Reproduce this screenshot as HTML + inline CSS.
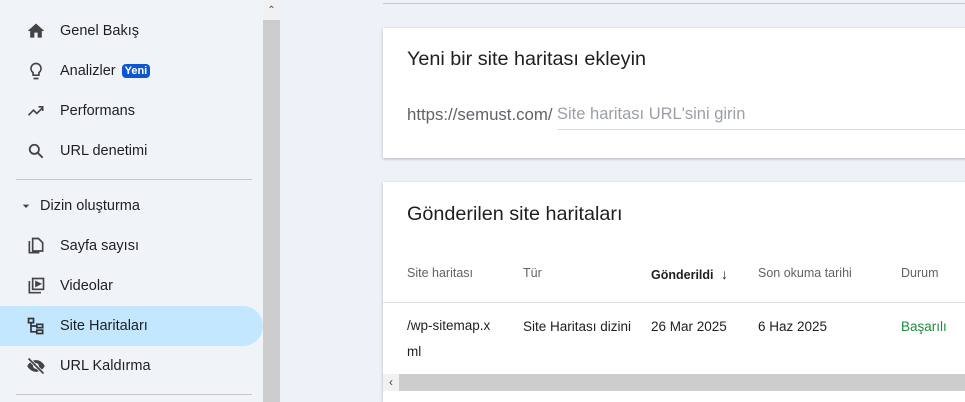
<!DOCTYPE html>
<html><head><meta charset="utf-8"><style>
*{box-sizing:border-box;margin:0;padding:0}
html,body{width:965px;height:402px;overflow:hidden}
body{background:#eef2f8;font-family:"Liberation Sans",sans-serif;position:relative;color:#1f1f1f}
.side{position:absolute;left:0;top:0;width:263px;height:402px;background:#f0f4f9}
.item{position:absolute;left:0;width:263px;height:40px;display:flex;align-items:center;font-size:14.5px;color:#1f1f1f}
.item svg{position:absolute;left:26px;width:20px;height:20px}
.item span.t{position:absolute;left:60px}
.sel{background:#c2e7ff;border-radius:0 20px 20px 0}
.hr{position:absolute;left:16px;width:236px;height:1px;background:#c7c7c7}
.badge{display:inline-block;background:#0b57d0;color:#fff;font-size:11px;font-weight:bold;padding:1px 3px;border-radius:4px;margin-left:6px;vertical-align:1px}
.sb{position:absolute;left:263px;top:0;width:17px;height:402px;background:#cdcdcd}
.sbt{position:absolute;left:263px;top:0;width:17px;height:20px;background:#f1f1f1;font-size:10px;text-align:center;color:#505050;line-height:22px}
.card{position:absolute;left:383px;width:600px;background:#fff;box-shadow:0 1px 3px rgba(0,0,0,.25)}
.th{position:absolute;top:266px;font-size:12.5px;color:#5f6368}
.td{position:absolute;top:319px;font-size:13.5px;color:#1f1f1f}
</style></head><body>
<div class="side">
 <div class="item" style="top:11px"><svg viewBox="0 0 24 24"><path d="M10 20v-6h4v6h5v-8h3L12 3 2 12h3v8z" fill="#444"/></svg><span class="t">Genel Bakış</span></div>
 <div class="item" style="top:51px"><svg viewBox="0 0 24 24" fill="none" stroke="#444" stroke-width="2"><path d="M9 21h6M12 3a6 6 0 0 0-3.5 10.9V17h7v-3.1A6 6 0 0 0 12 3z"/></svg><span class="t">Analizler<span class="badge">Yeni</span></span></div>
 <div class="item" style="top:91px"><svg viewBox="0 0 24 24" fill="none" stroke="#444" stroke-width="2"><path d="M3 17l6-6 4 4 7-7M15 7h5v5"/></svg><span class="t">Performans</span></div>
 <div class="item" style="top:131px"><svg viewBox="0 0 24 24" fill="none" stroke="#444" stroke-width="2.2"><circle cx="10" cy="10" r="5.5"/><path d="M14 14l6 6"/></svg><span class="t">URL denetimi</span></div>
 <div class="hr" style="top:179px"></div>
 <div class="item" style="top:186px"><svg viewBox="0 0 24 24" style="left:18px;width:16px;height:16px"><path d="M7 10l5 5 5-5z" fill="#444"/></svg><span class="t" style="left:40px">Dizin oluşturma</span></div>
 <div class="item" style="top:226px"><svg viewBox="0 0 24 24" fill="none" stroke="#444" stroke-width="2"><path d="M4 6v14h12M8 3h7l5 5v10H8z"/></svg><span class="t">Sayfa sayısı</span></div>
 <div class="item" style="top:266px"><svg viewBox="0 0 24 24" fill="none" stroke="#444" stroke-width="2"><path d="M4 6v14h14"/><rect x="8" y="3" width="13" height="13"/><path d="M12 7l5 2.5-5 2.5z" fill="#444"/></svg><span class="t">Videolar</span></div>
 <div class="item sel" style="top:306px"><svg viewBox="0 0 24 24" fill="none" stroke="#333" stroke-width="2"><rect x="3" y="3" width="6" height="5"/><rect x="13" y="10" width="7" height="4"/><rect x="13" y="17" width="7" height="4"/><path d="M6 8v11h7M6 12h7"/></svg><span class="t">Site Haritaları</span></div>
 <div class="item" style="top:346px"><svg viewBox="0 0 24 24"><path d="M12 5C6 5 2.5 10 1.5 12c1 2 4.5 7 10.5 7s9.5-5 10.5-7C21.5 10 18 5 12 5z" fill="#444"/><circle cx="12" cy="12" r="3.5" fill="#f0f4f9"/><path d="M3 3l18 18" stroke="#f0f4f9" stroke-width="4"/><path d="M3 3l18 18" stroke="#444" stroke-width="2"/></svg><span class="t">URL Kaldırma</span></div>
 <div class="hr" style="top:394px"></div>
</div>
<div class="sb"></div><div class="sbt">⌃</div>
<div style="position:absolute;left:383px;top:3px;width:600px;height:1px;background:#c4c7c5"></div>
<div class="card" style="top:28px;height:130px">
 <div style="position:absolute;left:24px;top:20px;font-size:19.8px;color:#1f1f1f">Yeni bir site haritası ekleyin</div>
 <div style="position:absolute;left:24px;top:77px;font-size:16.8px;color:#5f6368">https://semust.com/</div>
 <div style="position:absolute;left:174px;top:77px;width:420px;height:25px;border-bottom:1px solid #dadce0;font-size:16.5px;color:#9aa0a6">Site haritası URL'sini girin</div>
</div>
<div class="card" style="top:182px;height:220px"></div>
<div style="position:absolute;left:407px;top:203px;font-size:19.8px">Gönderilen site haritaları</div>
<div class="th" style="left:407px">Site haritası</div>
<div class="th" style="left:523px">Tür</div>
<div class="th" style="left:651px;color:#1f1f1f;font-weight:bold">Gönderildi <span style="font-weight:normal;font-size:14px;margin-left:4px">↓</span></div>
<div class="th" style="left:758px">Son okuma tarihi</div>
<div class="th" style="left:901px">Durum</div>
<div style="position:absolute;left:383px;top:302px;width:582px;height:1px;background:#e0e0e0"></div>
<div class="td" style="left:407px;line-height:26px;top:313px">/wp-sitemap.x<br>ml</div>
<div class="td" style="left:523px">Site Haritası dizini</div>
<div class="td" style="left:651px">26 Mar 2025</div>
<div class="td" style="left:758px">6 Haz 2025</div>
<div class="td" style="left:901px;color:#1e8e3e">Başarılı</div>
<div style="position:absolute;left:383px;top:374px;width:582px;height:17px;background:#cdcdcd"></div>
<div style="position:absolute;left:383px;top:374px;width:16px;height:17px;background:#f1f1f1;font-size:12px;text-align:center;line-height:17px;color:#444">‹</div>
</body></html>
